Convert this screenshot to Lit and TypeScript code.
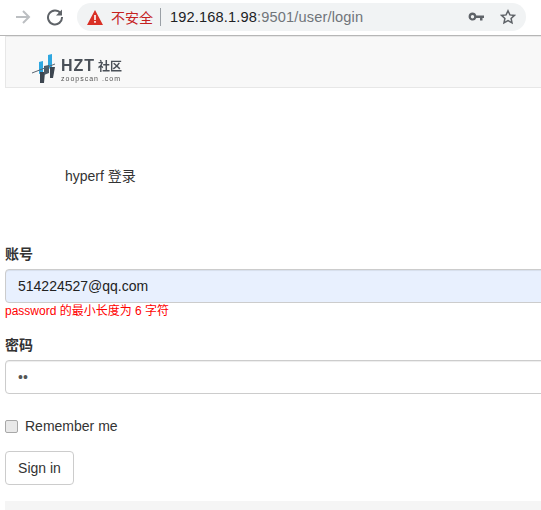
import { LitElement, html, css } from "lit";
import { customElement } from "lit/decorators.js";

@customElement("app-root")
export class AppRoot extends LitElement {
  static styles = css`
    :host { display: block; width: 541px; height: 510px; overflow: hidden; background: #fff;
      font-family: "Liberation Sans", "Noto Sans CJK SC", sans-serif; font-size: 14px; color: #333; }
    * { box-sizing: border-box; }
    .chrome { height: 36px; border-bottom: 1px solid #b6b6b6; display: flex; align-items: center; padding: 0 0 1px 15px; background: #fff; }
    .nav-ico { width: 16px; height: 16px; display: block; flex: none; }
    .reload { margin-left: 15px; width: 18px; height: 18px; }
    .omni { margin-left: 13px; width: 449px; height: 28px; border-radius: 14px; background: #f1f3f4; display: flex; align-items: center; padding-left: 10px; flex: none; }
    .warn { width: 16px; height: 15px; flex: none; }
    .unsafe { margin-left: 8px; font-size: 14px; color: #c5221f; }
    .sep { width: 1px; height: 18px; background: #9aa0a6; margin: 0 9px 0 7px; }
    .url { font-size: 14.6px; color: #202124; letter-spacing: .15px; white-space: nowrap; }
    .url span { color: #70757a; }
    .spacer { flex: 1; }
    .key { width: 16px; height: 10px; }
    .star { width: 16px; height: 16px; margin: 0 10px 0 16px; }
    .page { padding-left: 5px; margin-right: -40px; }
    .navbar { height: 52px; background: #f8f8f8; border: 1px solid #e7e7e7; padding: 15px 0 0 26px; display: flex; }
    .logo { display: flex; gap: 5px; align-items: flex-start; filter: blur(.35px); }
    .mark { width: 24px; height: 31px; margin-top: 1px; }
    .brand { display: flex; flex-direction: column; color: #4a5058; margin-top: 5px; }
    .brand b { font-size: 16px; line-height: 17px; letter-spacing: 1px; font-weight: 700; white-space: nowrap; }
    .brand b i { font-style: normal; font-size: 12px; margin-left: 3px; letter-spacing: 0; }
    .brand small { font-size: 7px; line-height: 6px; letter-spacing: 1px; white-space: nowrap; color: #555; }
    .title { padding: 78px 0 0 60px; line-height: 20px; height: 156px; }
    .field-label { display: block; font-weight: 700; line-height: 20px; margin-bottom: 5px; }
    .input { display: block; width: 100%; height: 34px; border: 1px solid #ccc; border-radius: 4px; padding: 6px 12px; font: inherit; color: #555; background: #fff; box-shadow: inset 0 1px 1px rgba(0,0,0,.075); line-height: 20px; outline: none; }
    .input.filled { background: #e8f0fe; color: #222; }
    .input.pw { font-size: 14px; letter-spacing: 0; padding-top: 5px; }
    .err { color: #f00; font-size: 12px; line-height: 16px; height: 17px; }
    .pwd { margin-top: 15px; }
    .remember { display: flex; align-items: center; margin-top: 20px; height: 24px; line-height: 20px; }
    .cb { appearance: none; width: 13px; height: 13px; margin: 0 7px 0 0; background: #e9e9e9; border: 1px solid #a8a8a8; border-radius: 2px; }
    .btn { display: block; margin-top: 13px; width: 69px; height: 34px; border: 1px solid #ccc; border-radius: 4px; background: #fff; font: inherit; color: #333; padding: 0; }
    .foot { margin-top: 16px; height: 20px; background: #f5f5f5; }
  `;

  render() {
    return html`
      <div class="chrome">
        <svg class="nav-ico" viewBox="0 0 16 16" fill="none" stroke="#bcbfc2" stroke-width="2"><path d="M1 8h13M8 2l6 6-6 6"/></svg>
        <svg class="nav-ico reload" viewBox="0 0 18 18" fill="none"><path d="M14.6 5.2A7 7 0 1 0 16 9" stroke="#5f6368" stroke-width="2"/><path d="M16 1.500v6h-6z" fill="#5f6368"/></svg>
        <div class="omni">
          <svg class="warn" viewBox="0 0 16 15"><path d="M8 0l8 15H0z" fill="#d93025"/><path d="M7.200 5h1.600v5H7.200zM7.200 11h1.600v1.700H7.200z" fill="#fff"/></svg>
          <span class="unsafe">不安全</span><i class="sep"></i>
          <span class="url">192.168.1.98<span>:9501/user/login</span></span>
          <div class="spacer"></div>
          <svg class="key" viewBox="0 0 16 10"><path fill-rule="evenodd" d="M4.500 0.500a4 4 0 0 1 3.800 3H16v2.500h-1.500V8.500h-2.500V6H8.300a4 4 0 1 1-3.800-5.500zM4.500 3a1.700 1.700 0 1 0 0 3.400 1.700 1.700 0 0 0 0-3.400z" fill="#5f6368"/></svg>
          <svg class="star" viewBox="0 0 16 16" fill="none" stroke="#5f6368" stroke-width="1.500"><path d="M8 1.800l1.900 4.100 4.500.5-3.300 3 .9 4.400L8 11.600l-4 2.200.9-4.400-3.300-3 4.500-.5z"/></svg>
        </div>
      </div>
      <div class="page">
        <div class="navbar">
          <div class="logo">
            <svg class="mark" viewBox="0 0 24 31">
              <path d="M7 9l4-1v12l-4 1z" fill="#2ea7e0"/>
              <path d="M16 2l4-1v14l-4 1z" fill="#2ea7e0"/>
              <path d="M8 19h5l-1 11H8z" fill="#3d4650"/>
              <path d="M18 14h5l-2 11h-3z" fill="#3d4650"/>
              <path d="M12 13l5-1v8l-5 2z" fill="#4c5a66"/>
              <path d="M0 20l23-9" stroke="#5a6570" stroke-width="1"/>
            </svg>
            <div class="brand"><b>HZT<i>社区</i></b><small>zoopscan .com</small></div>
          </div>
        </div>
        <div class="title">hyperf 登录</div>
        <label class="field-label">账号</label>
        <input class="input filled" .value=${"514224527@qq.com"} />
        <div class="err">password 的最小长度为 6 字符</div>
        <label class="field-label pwd">密码</label>
        <input class="input pw" type="password" .value=${"12"} />
        <label class="remember"><input class="cb" type="checkbox" />Remember me</label>
        <button class="btn">Sign in</button>
        <div class="foot"></div>
      </div>
    `;
  }
}
